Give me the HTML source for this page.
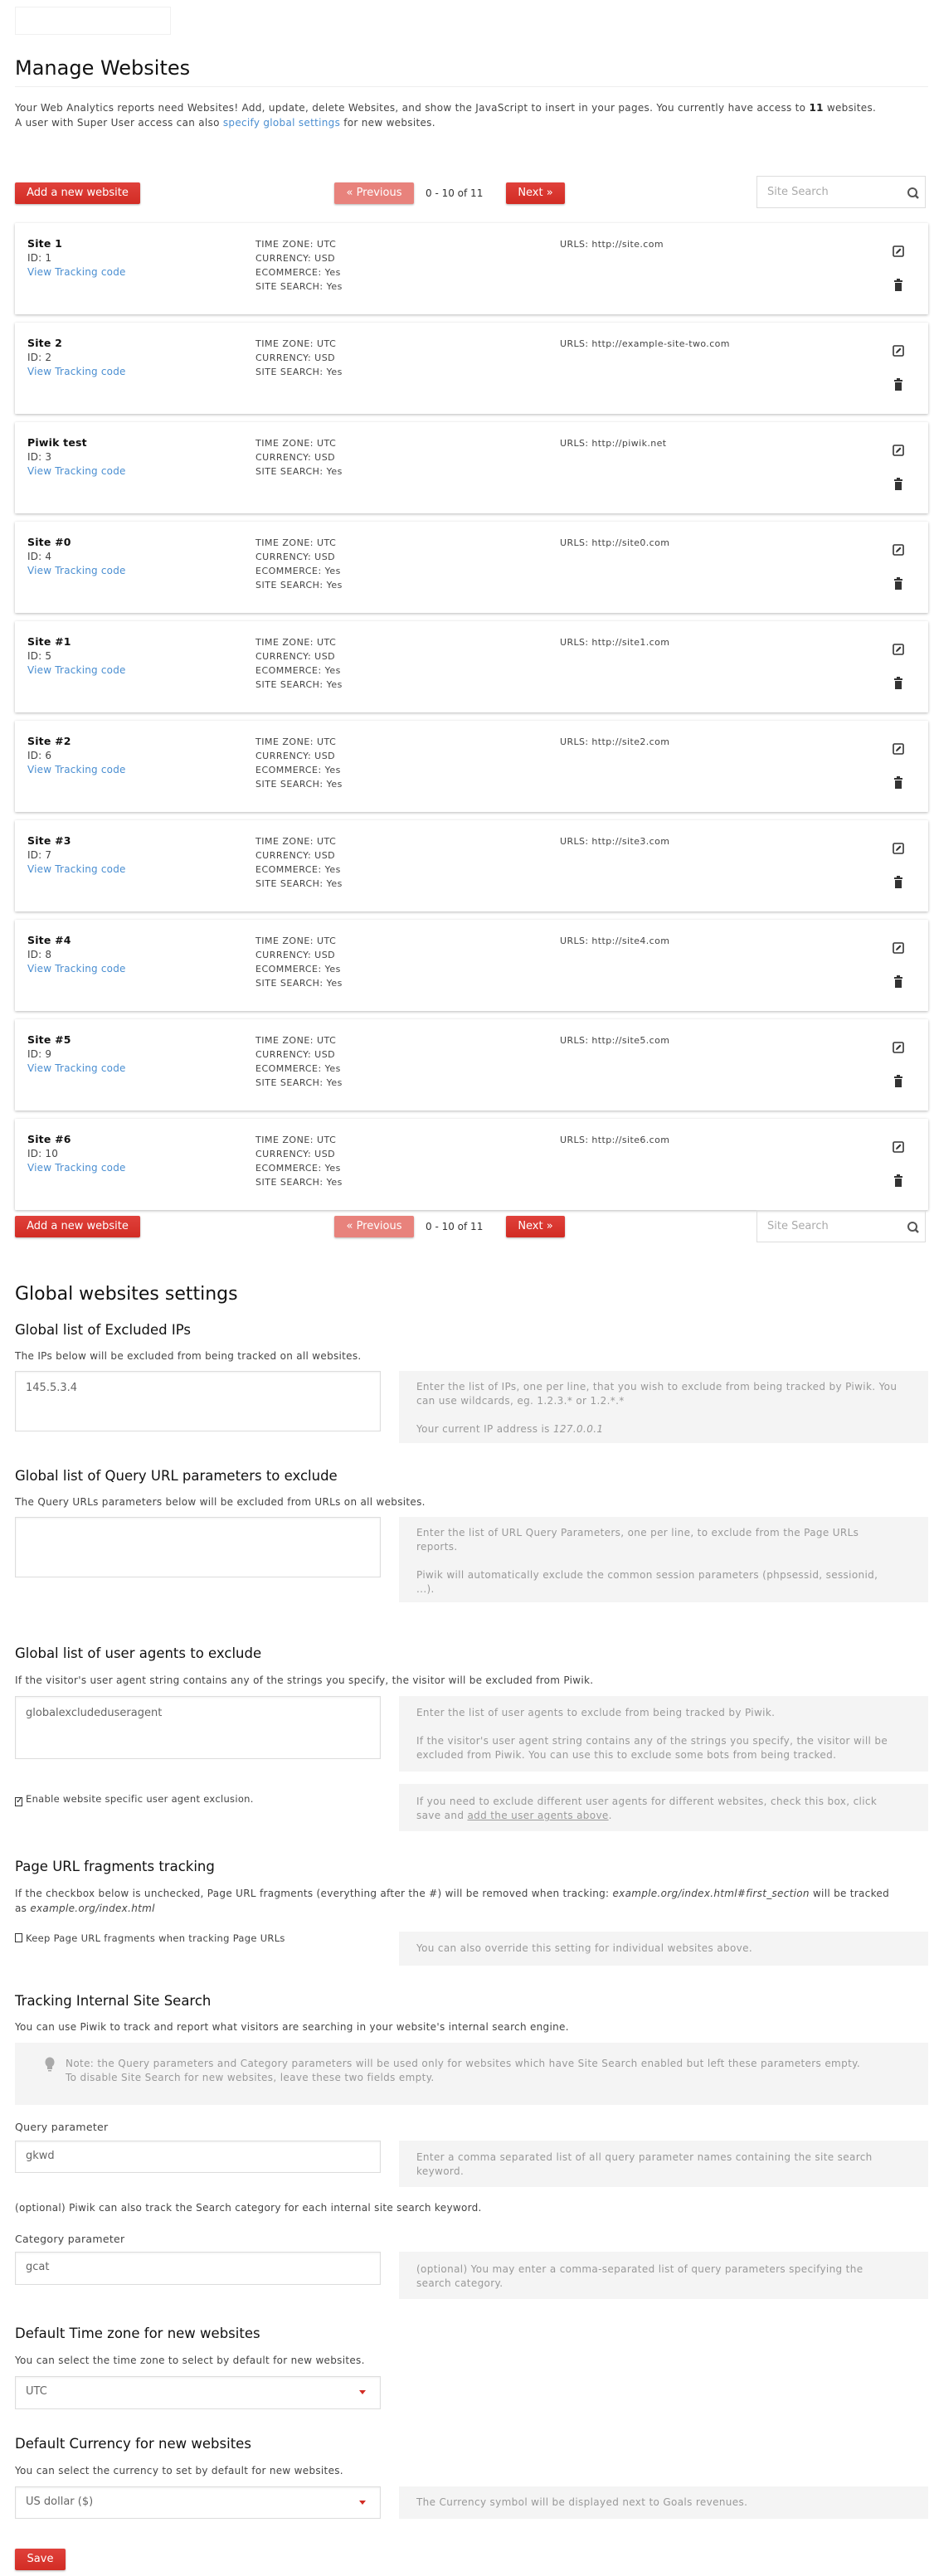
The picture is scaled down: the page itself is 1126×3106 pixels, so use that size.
<!DOCTYPE html>
<html><head><meta charset="utf-8">
<style>
*{box-sizing:border-box;margin:0;padding:0}
body{width:1126px;height:3106px;position:relative;background:#fff;font-family:"DejaVu Sans","Liberation Sans",sans-serif;font-size:12px;color:#444;overflow:hidden}
.a{position:absolute}
.btn{position:absolute;background:linear-gradient(#e0413b,#d22c24);color:#fff;font-size:13px;border-radius:2px;box-shadow:0 1px 2px rgba(0,0,0,.3);text-align:center;line-height:26px;height:26px}
.prev{background:#e8827c}
.search{position:absolute;border:1px solid #ddd;height:39px;width:204px;color:#aaa;font-size:13px;line-height:37px;padding-left:12px}
.card{position:absolute;left:18px;width:1101px;height:110px;background:#fff;box-shadow:0 1px 3px rgba(0,0,0,.28);border-radius:1px}
.card .n{position:absolute;left:15px;top:16px;line-height:17px;font-size:12px;letter-spacing:.2px}
.card .n b{color:#111;font-size:12.5px}
.card .n span{color:#4a8ed1}
.card .m{position:absolute;left:290px;top:17px;line-height:17px;font-size:11px;color:#444;letter-spacing:.5px}
.card .u{position:absolute;left:657px;top:17px;line-height:17px;font-size:11px;color:#444;letter-spacing:.4px}
.card svg{position:absolute;left:1058px}
h1{position:absolute;font-weight:normal;color:#111;font-size:24px}
h2{position:absolute;font-weight:normal;color:#111;font-size:22px}
h3{position:absolute;font-weight:500;color:#111;font-size:16.5px;font-family:"DejaVu Sans",sans-serif}
.p{position:absolute;left:18px;line-height:18px;font-size:12px;color:#444;letter-spacing:.3px}
.ta{position:absolute;left:18px;width:441px;border:1px solid #ddd;box-shadow:inset 0 1px 2px rgba(0,0,0,.06);background:#fff;font-size:13px;color:#666;padding:12px 12px}
.help{position:absolute;left:481px;width:638px;background:#f4f4f4;color:#999;font-size:12px;line-height:17px;padding:0 36px 0 21px;letter-spacing:.35px}
.sel::after{content:"";position:absolute;right:17px;top:16px;border:4px solid transparent;border-top:5px solid #d22c24}
.cb{display:inline-block;width:9px;height:11px;border:1px solid #333;vertical-align:-1px;margin-right:4px;font-size:10px;line-height:8px;text-align:center;color:#111}
</style></head><body>

<div class="a" style="left:18px;top:8px;width:188px;height:34px;border:1px solid #f0f0f0"></div>
<h1 style="left:18px;top:68px">Manage Websites</h1>
<div class="a" style="left:18px;top:104px;width:1101px;height:1px;background:#eee"></div>
<div class="p" style="top:121px;width:1070px">Your Web Analytics reports need Websites! Add, update, delete Websites, and show the JavaScript to insert in your pages. You currently have access to <b style="color:#222">11</b> websites.<br>A user with Super User access can also <span style="color:#4a8ed1">specify global settings</span> for new websites.</div>

<div class="btn" style="left:18px;top:220px;width:151px">Add a new website</div>
<div class="btn prev" style="left:403px;top:220px;width:96px">« Previous</div>
<div class="a" style="left:513px;top:220px;line-height:26px;font-size:12px;color:#333">0 - 10 of 11</div>
<div class="btn" style="left:610px;top:220px;width:71px">Next »</div>
<div class="search" style="left:912px;top:212px">Site Search<svg class="a" style="right:6px;top:12px" width="16" height="16" viewBox="0 0 16 16"><circle cx="7" cy="7" r="5" fill="none" stroke="#555" stroke-width="2"/><path d="M10.5 10.5 L14 14" stroke="#555" stroke-width="2.4"/></svg></div>

<div id="cards"></div>

<div class="btn" style="left:18px;top:1466px;width:151px">Add a new website</div>
<div class="btn prev" style="left:403px;top:1466px;width:96px">« Previous</div>
<div class="a" style="left:513px;top:1466px;line-height:26px;font-size:12px;color:#333">0 - 10 of 11</div>
<div class="btn" style="left:610px;top:1466px;width:71px">Next »</div>
<div class="search" style="left:912px;top:1459px">Site Search<svg class="a" style="right:6px;top:12px" width="16" height="16" viewBox="0 0 16 16"><circle cx="7" cy="7" r="5" fill="none" stroke="#555" stroke-width="2"/><path d="M10.5 10.5 L14 14" stroke="#555" stroke-width="2.4"/></svg></div>

<h2 style="left:18px;top:1548px">Global websites settings</h2>

<h3 style="left:18px;top:1594px">Global list of Excluded IPs</h3>
<div class="p" style="top:1626px">The IPs below will be excluded from being tracked on all websites.</div>
<div class="ta" style="top:1653px;height:73px">145.5.3.4</div>
<div class="help" style="top:1653px;height:87px;padding-top:11px">Enter the list of IPs, one per line, that you wish to exclude from being tracked by Piwik. You can use wildcards, eg. 1.2.3.* or 1.2.*.*<br><br>Your current IP address is <i>127.0.0.1</i></div>

<h3 style="left:18px;top:1770px">Global list of Query URL parameters to exclude</h3>
<div class="p" style="top:1802px">The Query URLs parameters below will be excluded from URLs on all websites.</div>
<div class="ta" style="top:1829px;height:73px"></div>
<div class="help" style="top:1829px;height:103px;padding-top:11px">Enter the list of URL Query Parameters, one per line, to exclude from the Page URLs reports.<br><br>Piwik will automatically exclude the common session parameters (phpsessid, sessionid, ...).</div>

<h3 style="left:18px;top:1984px">Global list of user agents to exclude</h3>
<div class="p" style="top:2017px">If the visitor's user agent string contains any of the strings you specify, the visitor will be excluded from Piwik.</div>
<div class="ta" style="top:2045px;height:76px">globalexcludeduseragent</div>
<div class="help" style="top:2045px;height:91px;padding-top:12px">Enter the list of user agents to exclude from being tracked by Piwik.<br><br>If the visitor's user agent string contains any of the strings you specify, the visitor will be excluded from Piwik. You can use this to exclude some bots from being tracked.</div>
<div class="p" style="top:2160px;font-size:11.5px"><span class="cb">✓</span>Enable website specific user agent exclusion.</div>
<div class="help" style="top:2151px;height:57px;padding-top:13px">If you need to exclude different user agents for different websites, check this box, click save and <u>add the user agents above</u>.</div>

<h3 style="left:18px;top:2241px">Page URL fragments tracking</h3>
<div class="p" style="top:2274px;width:1060px">If the checkbox below is unchecked, Page URL fragments (everything after the #) will be removed when tracking: <i>example.org/index.html#first_section</i> will be tracked as <i>example.org/index.html</i></div>
<div class="p" style="top:2328px;font-size:11.5px"><span class="cb"></span>Keep Page URL fragments when tracking Page URLs</div>
<div class="help" style="top:2329px;height:41px;line-height:41px">You can also override this setting for individual websites above.</div>

<h3 style="left:18px;top:2403px">Tracking Internal Site Search</h3>
<div class="p" style="top:2435px">You can use Piwik to track and report what visitors are searching in your website's internal search engine.</div>
<div class="help" style="left:18px;width:1101px;top:2463px;height:75px;padding:17px 0 0 61px">Note: the Query parameters and Category parameters will be used only for websites which have Site Search enabled but left these parameters empty.<br>To disable Site Search for new websites, leave these two fields empty.
<svg class="a" style="left:35px;top:17px" width="14" height="20" viewBox="0 0 14 20"><ellipse cx="7" cy="6.5" rx="5.5" ry="6" fill="#aaa"/><rect x="4" y="11" width="6" height="4" fill="#aaa"/><rect x="5" y="16" width="4" height="1.5" fill="#aaa"/></svg></div>

<div class="p" style="top:2556px;font-size:12.5px">Query parameter</div>
<div class="ta" style="top:2581px;height:39px;padding:10px 12px">gkwd</div>
<div class="help" style="top:2581px;height:56px;padding-top:12px">Enter a comma separated list of all query parameter names containing the site search keyword.</div>
<div class="p" style="top:2653px">(optional) Piwik can also track the Search category for each internal site search keyword.</div>
<div class="p" style="top:2691px;font-size:12.5px">Category parameter</div>
<div class="ta" style="top:2715px;height:40px;padding:10px 12px">gcat</div>
<div class="help" style="top:2715px;height:57px;padding-top:13px">(optional) You may enter a comma-separated list of query parameters specifying the search category.</div>

<h3 style="left:18px;top:2804px">Default Time zone for new websites</h3>
<div class="p" style="top:2837px">You can select the time zone to select by default for new websites.</div>
<div class="ta sel" style="top:2865px;height:40px;padding:10px 12px">UTC</div>

<h3 style="left:18px;top:2937px">Default Currency for new websites</h3>
<div class="p" style="top:2970px">You can select the currency to set by default for new websites.</div>
<div class="ta sel" style="top:2998px;height:39px;padding:10px 12px">US dollar ($)</div>
<div class="help" style="top:2998px;height:39px;line-height:39px">The Currency symbol will be displayed next to Goals revenues.</div>

<div class="btn" style="left:18px;top:3073px;width:61px">Save</div>

<script>
var s=[["Site 1",1,"http://site.com",1],["Site 2",2,"http://example-site-two.com",0],["Piwik test",3,"http://piwik.net",0],["Site #0",4,"http://site0.com",1],["Site #1",5,"http://site1.com",1],["Site #2",6,"http://site2.com",1],["Site #3",7,"http://site3.com",1],["Site #4",8,"http://site4.com",1],["Site #5",9,"http://site5.com",1],["Site #6",10,"http://site6.com",1]];
var h="";
s.forEach(function(x,i){
h+='<div class="card" style="top:'+(269+i*120)+'px"><div class="n"><b>'+x[0]+'</b><br>ID: '+x[1]+'<br><span>View Tracking code</span></div><div class="m">TIME ZONE: UTC<br>CURRENCY: USD<br>'+(x[3]?'ECOMMERCE: Yes<br>':'')+'SITE SEARCH: Yes</div><div class="u">URLS: '+x[2]+'</div>'+
'<svg style="top:27px" width="14" height="14" viewBox="0 0 14 14"><rect x="1" y="1" width="12" height="12" rx="1.5" fill="none" stroke="#333" stroke-width="1.6"/><path d="M4 10 L4.5 8 L9 3.5 L10.5 5 L6 9.5 Z" fill="#333"/></svg>'+
'<svg style="top:67px" width="14" height="16" viewBox="0 0 14 16"><rect x="5" y="0" width="4" height="2" fill="#333"/><rect x="2" y="2" width="10" height="2" fill="#333"/><rect x="3" y="5" width="8" height="10" fill="#333"/></svg></div>';
});
document.getElementById("cards").innerHTML=h;
</script>
</body></html>
